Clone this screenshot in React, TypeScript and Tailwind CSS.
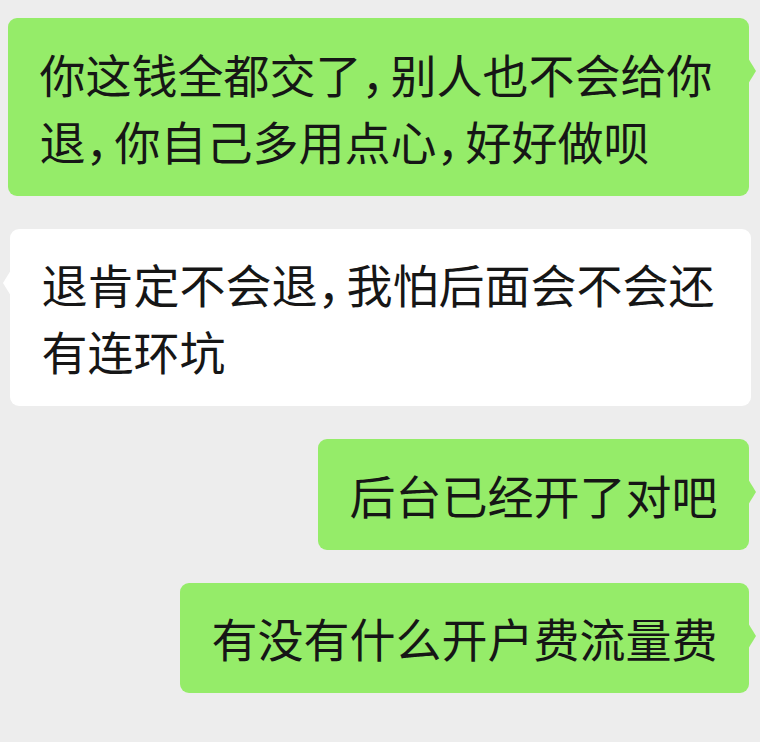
import React from "react";

type Msg = { side: "left" | "right"; lines: string[] };

const messages: Msg[] = [
  { side: "right", lines: ["你这钱全都交了，别人也不会给你", "退，你自己多用点心，好好做呗"] },
  { side: "left", lines: ["退肯定不会退，我怕后面会不会还", "有连环坑"] },
  { side: "right", lines: ["后台已经开了对吧"] },
  { side: "right", lines: ["有没有什么开户费流量费"] },
];

// android-style compressed punctuation: commas take ~29px instead of a full cell
function renderLine(text: string) {
  return text.split(/(，)/).map((part, i) =>
    part === "，" ? (
      <span key={i} className="mr-[6px] [font-feature-settings:'halt']">
        ，
      </span>
    ) : (
      <React.Fragment key={i}>{part}</React.Fragment>
    )
  );
}

function Bubble({ side, lines }: Msg) {
  const mine = side === "right";
  // wrapped messages fill the max bubble width
  const wide = lines.length > 1 ? "w-[741px] " : "";
  return (
    <div className={mine ? "flex justify-end pr-[11px]" : "flex justify-start pl-[10px]"}>
      <div
        className={
          "relative max-w-[741px] rounded-[9px] px-[31.5px] py-[21.75px] text-[46px] leading-[67px] text-[#161616] " +
          wide +
          (mine ? "bg-[#95ec69]" : "bg-white")
        }
      >
        {lines.map((l, i) => (
          <div key={i} className="whitespace-nowrap">
            {renderLine(l)}
          </div>
        ))}
        {mine ? (
          <span className="absolute right-[-7px] top-[40px] h-0 w-0 border-y-[13px] border-l-[8px] border-y-transparent border-l-[#95ec69]" />
        ) : (
          <span className="absolute left-[-7px] top-[41px] h-0 w-0 border-y-[13px] border-r-[8px] border-y-transparent border-r-white" />
        )}
      </div>
    </div>
  );
}

export default function App() {
  return (
    <div
      className="min-h-screen w-full bg-[#ededed] pt-[18px]"
      style={{ fontFamily: '"Noto Sans CJK SC", "Noto Sans", sans-serif' }}
    >
      <div className="flex flex-col gap-[33px]">
        {messages.map((m, i) => (
          <Bubble key={i} {...m} />
        ))}
      </div>
    </div>
  );
}
